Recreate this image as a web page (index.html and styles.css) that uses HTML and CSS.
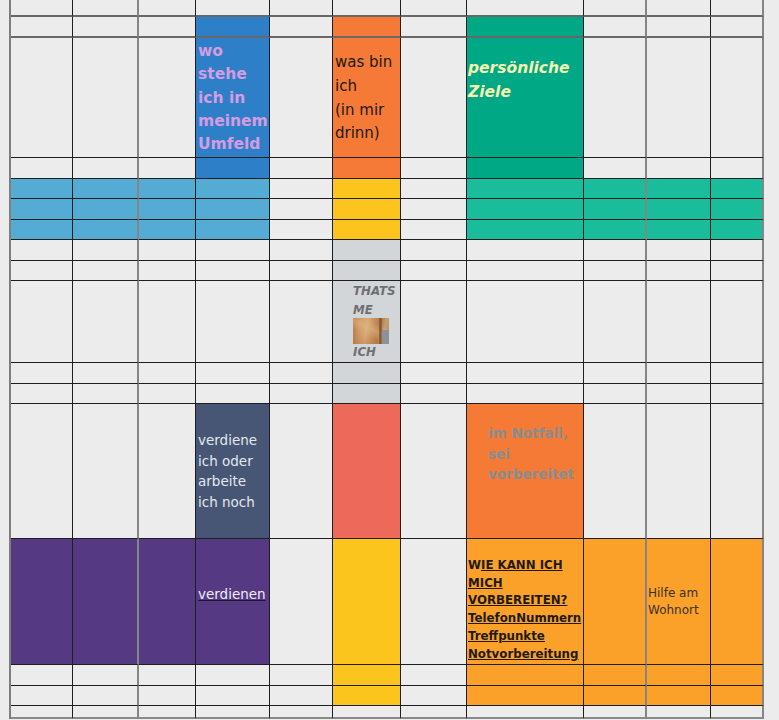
FILE: index.html
```html
<!DOCTYPE html>
<html lang="de">
<head>
<meta charset="utf-8">
<title>Thats me</title>
<link rel="stylesheet" href="styles.css">
</head>
<body>
<div class="sheet">
  <div class="row h17 thick">
    <div class="cell"></div><div class="cell"></div><div class="cell"></div><div class="cell"></div><div class="cell"></div><div class="cell"></div><div class="cell"></div><div class="cell"></div><div class="cell"></div><div class="cell"></div><div class="cell"></div>
  </div>
  <div class="row h21 thick">
    <div class="cell"></div><div class="cell"></div><div class="cell"></div><div class="cell blue"></div><div class="cell"></div><div class="cell orange"></div><div class="cell"></div><div class="cell green"></div><div class="cell"></div><div class="cell"></div><div class="cell"></div>
  </div>
  <div class="row h120">
    <div class="cell"></div><div class="cell"></div><div class="cell"></div>
    <div class="cell blue"><div class="t-umfeld">wo<br>stehe<br>ich in<br>meinem<br>Umfeld</div></div>
    <div class="cell"></div>
    <div class="cell orange mid"><div class="t-binich">was bin<br>ich<br>(in mir<br>drinn)</div></div>
    <div class="cell"></div>
    <div class="cell green"><div class="t-ziele">persönliche<br>Ziele</div></div>
    <div class="cell"></div><div class="cell"></div><div class="cell"></div>
  </div>
  <div class="row h21">
    <div class="cell"></div><div class="cell"></div><div class="cell"></div><div class="cell blue"></div><div class="cell"></div><div class="cell orange"></div><div class="cell"></div><div class="cell green"></div><div class="cell"></div><div class="cell"></div><div class="cell"></div>
  </div>
  <div class="row h20">
    <div class="cell sky"></div><div class="cell sky"></div><div class="cell sky"></div><div class="cell sky"></div><div class="cell"></div><div class="cell yellow"></div><div class="cell"></div><div class="cell teal"></div><div class="cell teal"></div><div class="cell teal"></div><div class="cell teal"></div>
  </div>
  <div class="row h21">
    <div class="cell sky"></div><div class="cell sky"></div><div class="cell sky"></div><div class="cell sky"></div><div class="cell"></div><div class="cell yellow"></div><div class="cell"></div><div class="cell teal"></div><div class="cell teal"></div><div class="cell teal"></div><div class="cell teal"></div>
  </div>
  <div class="row h20">
    <div class="cell sky"></div><div class="cell sky"></div><div class="cell sky"></div><div class="cell sky"></div><div class="cell"></div><div class="cell yellow"></div><div class="cell"></div><div class="cell teal"></div><div class="cell teal"></div><div class="cell teal"></div><div class="cell teal"></div>
  </div>
  <div class="row h21">
    <div class="cell"></div><div class="cell"></div><div class="cell"></div><div class="cell"></div><div class="cell"></div><div class="cell grey"></div><div class="cell"></div><div class="cell"></div><div class="cell"></div><div class="cell"></div><div class="cell"></div>
  </div>
  <div class="row h20">
    <div class="cell"></div><div class="cell"></div><div class="cell"></div><div class="cell"></div><div class="cell"></div><div class="cell grey"></div><div class="cell"></div><div class="cell"></div><div class="cell"></div><div class="cell"></div><div class="cell"></div>
  </div>
  <div class="row h82">
    <div class="cell"></div><div class="cell"></div><div class="cell"></div><div class="cell"></div><div class="cell"></div>
    <div class="cell grey"><div class="t-me">THATS<br>ME<div class="photo" role="img" aria-label="Foto"></div>ICH</div></div>
    <div class="cell"></div><div class="cell"></div><div class="cell"></div><div class="cell"></div><div class="cell"></div>
  </div>
  <div class="row h21">
    <div class="cell"></div><div class="cell"></div><div class="cell"></div><div class="cell"></div><div class="cell"></div><div class="cell grey"></div><div class="cell"></div><div class="cell"></div><div class="cell"></div><div class="cell"></div><div class="cell"></div>
  </div>
  <div class="row h20">
    <div class="cell"></div><div class="cell"></div><div class="cell"></div><div class="cell"></div><div class="cell"></div><div class="cell grey"></div><div class="cell"></div><div class="cell"></div><div class="cell"></div><div class="cell"></div><div class="cell"></div>
  </div>
  <div class="row h135">
    <div class="cell"></div><div class="cell"></div><div class="cell"></div>
    <div class="cell slate mid"><div class="t-arbeite">verdiene<br>ich oder<br>arbeite<br>ich noch</div></div>
    <div class="cell"></div>
    <div class="cell coral"></div>
    <div class="cell"></div>
    <div class="cell orange2"><div class="t-notfall">im Notfall,<br>sei<br>vorbereitet</div></div>
    <div class="cell"></div><div class="cell"></div><div class="cell"></div>
  </div>
  <div class="row h126">
    <div class="cell purple"></div><div class="cell purple"></div><div class="cell purple"></div>
    <div class="cell purple"><div class="t-verdienen"><u>verdienen</u></div></div>
    <div class="cell"></div>
    <div class="cell yellow"></div>
    <div class="cell"></div>
    <div class="cell amber"><div class="t-wie">W<u>IE KANN ICH</u><br><u>MICH</u><br><u>VORBEREITEN?</u><br><u>TelefonNummern</u><br><u>Treffpunkte</u><br><u>Notvorbereitung</u></div></div>
    <div class="cell amber"></div>
    <div class="cell amber mid"><div class="t-hilfe">Hilfe am<br>Wohnort</div></div>
    <div class="cell amber"></div>
  </div>
  <div class="row h21">
    <div class="cell"></div><div class="cell"></div><div class="cell"></div><div class="cell"></div><div class="cell"></div><div class="cell yellow"></div><div class="cell"></div><div class="cell amber"></div><div class="cell amber"></div><div class="cell amber"></div><div class="cell amber"></div>
  </div>
  <div class="row h20">
    <div class="cell"></div><div class="cell"></div><div class="cell"></div><div class="cell"></div><div class="cell"></div><div class="cell yellow"></div><div class="cell"></div><div class="cell amber"></div><div class="cell amber"></div><div class="cell amber"></div><div class="cell amber"></div>
  </div>
  <div class="row h13 last">
    <div class="cell"></div><div class="cell"></div><div class="cell"></div><div class="cell"></div><div class="cell"></div><div class="cell"></div><div class="cell"></div><div class="cell"></div><div class="cell"></div><div class="cell"></div><div class="cell"></div>
  </div>
</div>
</body>
</html>
```

FILE: styles.css
```css
html, body {
  margin: 0;
  padding: 0;
  background: #ebeceb;
  font-family: "DejaVu Sans", Verdana, sans-serif;
  overflow: hidden;
}

.sheet {
  margin-left: 9px;
  width: max-content;
  border-left: 2px solid #7e7e7e;
  display: flex;
  flex-direction: column;
}

.row {
  display: grid;
  grid-template-columns: 62px 66px 57px 74px 63px 68px 66px 117px 63px 64px 53px;
}

.h13 { height: 13px; }
.h17 { height: 17px; }
.h20 { height: 20px; }
.h21 { height: 21px; }
.h82 { height: 82px; }
.h120 { height: 120px; }
.h126 { height: 126px; }
.h135 { height: 135px; }

.cell {
  box-sizing: border-box;
  border-right: 1px solid #1e1e1e;
  border-bottom: 1px solid #1e1e1e;
  min-width: 0;
  overflow: visible;
  white-space: nowrap;
}

.row .cell:nth-child(2),
.row .cell:nth-child(9),
.row .cell:nth-child(11) {
  border-right: 2px solid #858585;
}

.thick .cell { border-bottom: 2px solid #686868; }
.last .cell { border-bottom: 2px solid #8a8a8a; }

.mid {
  display: flex;
  align-items: center;
}

/* fills */
.blue { background: #2d80c8; }
.orange { background: #f57a38; }
.green { background: #00a886; }
.sky { background: #54abd3; }
.yellow { background: #fbc51e; }
.teal { background: #1abd9b; }
.grey { background: #d3d6d9; }
.slate { background: #475674; }
.coral { background: #ed6a5a; }
.orange2 { background: #f47a36; }
.purple { background: #563983; }
.amber { background: #fba12a; }

/* texts */
.t-umfeld {
  padding: 2px 0 0 2px;
  font-size: 15.5px;
  line-height: 23.3px;
  font-weight: bold;
  color: #d69be2;
}

.t-binich {
  padding: 2px 0 0 2px;
  font-size: 15px;
  line-height: 23.7px;
  color: #1a1a1a;
}

.t-ziele {
  padding: 18px 0 0 1px;
  font-size: 15.5px;
  line-height: 24px;
  font-weight: bold;
  font-style: italic;
  color: #f7f2b0;
}

.t-me {
  padding: 1px 0 0 20px;
  font-size: 11.8px;
  line-height: 19px;
  font-weight: bold;
  font-style: italic;
  color: #6f6f73;
}

.photo {
  width: 36px;
  height: 26px;
  margin: -2px 0 -1px;
  background:
    linear-gradient(180deg, transparent 45%, #8c9298 45%) right / 7px 100% no-repeat,
    linear-gradient(90deg, transparent 72%, #8a5c36 74%, #7a5232 78%, transparent 81%),
    linear-gradient(25deg, rgba(170,110,60,0.5) 0%, transparent 35%, rgba(225,185,135,0.5) 55%, transparent 75%),
    linear-gradient(100deg, #b47844 0%, #cf9a64 20%, #d9ab78 38%, #c68f5a 55%, #b07a48 70%, #c89f70 84%, #a08870 100%);
}

.t-arbeite {
  padding-left: 2px;
  font-size: 13.5px;
  line-height: 20.5px;
  color: #e3e8f0;
}

.t-notfall {
  padding: 19px 0 0 21px;
  font-size: 13.5px;
  line-height: 20.5px;
  font-weight: bold;
  color: #888d8e;
}

.t-verdienen {
  padding: 45px 0 0 2px;
  font-size: 13.5px;
  line-height: 20px;
  color: #eeecf6;
}

.t-verdienen u {
  text-decoration-color: #1e1530;
}

.t-wie {
  padding: 18px 0 0 1px;
  font-size: 11.8px;
  line-height: 17.7px;
  font-weight: bold;
  color: #1e1a12;
}

.t-hilfe {
  padding: 1px 0 0 1px;
  font-size: 12px;
  line-height: 17px;
  color: #3a3226;
}
```
